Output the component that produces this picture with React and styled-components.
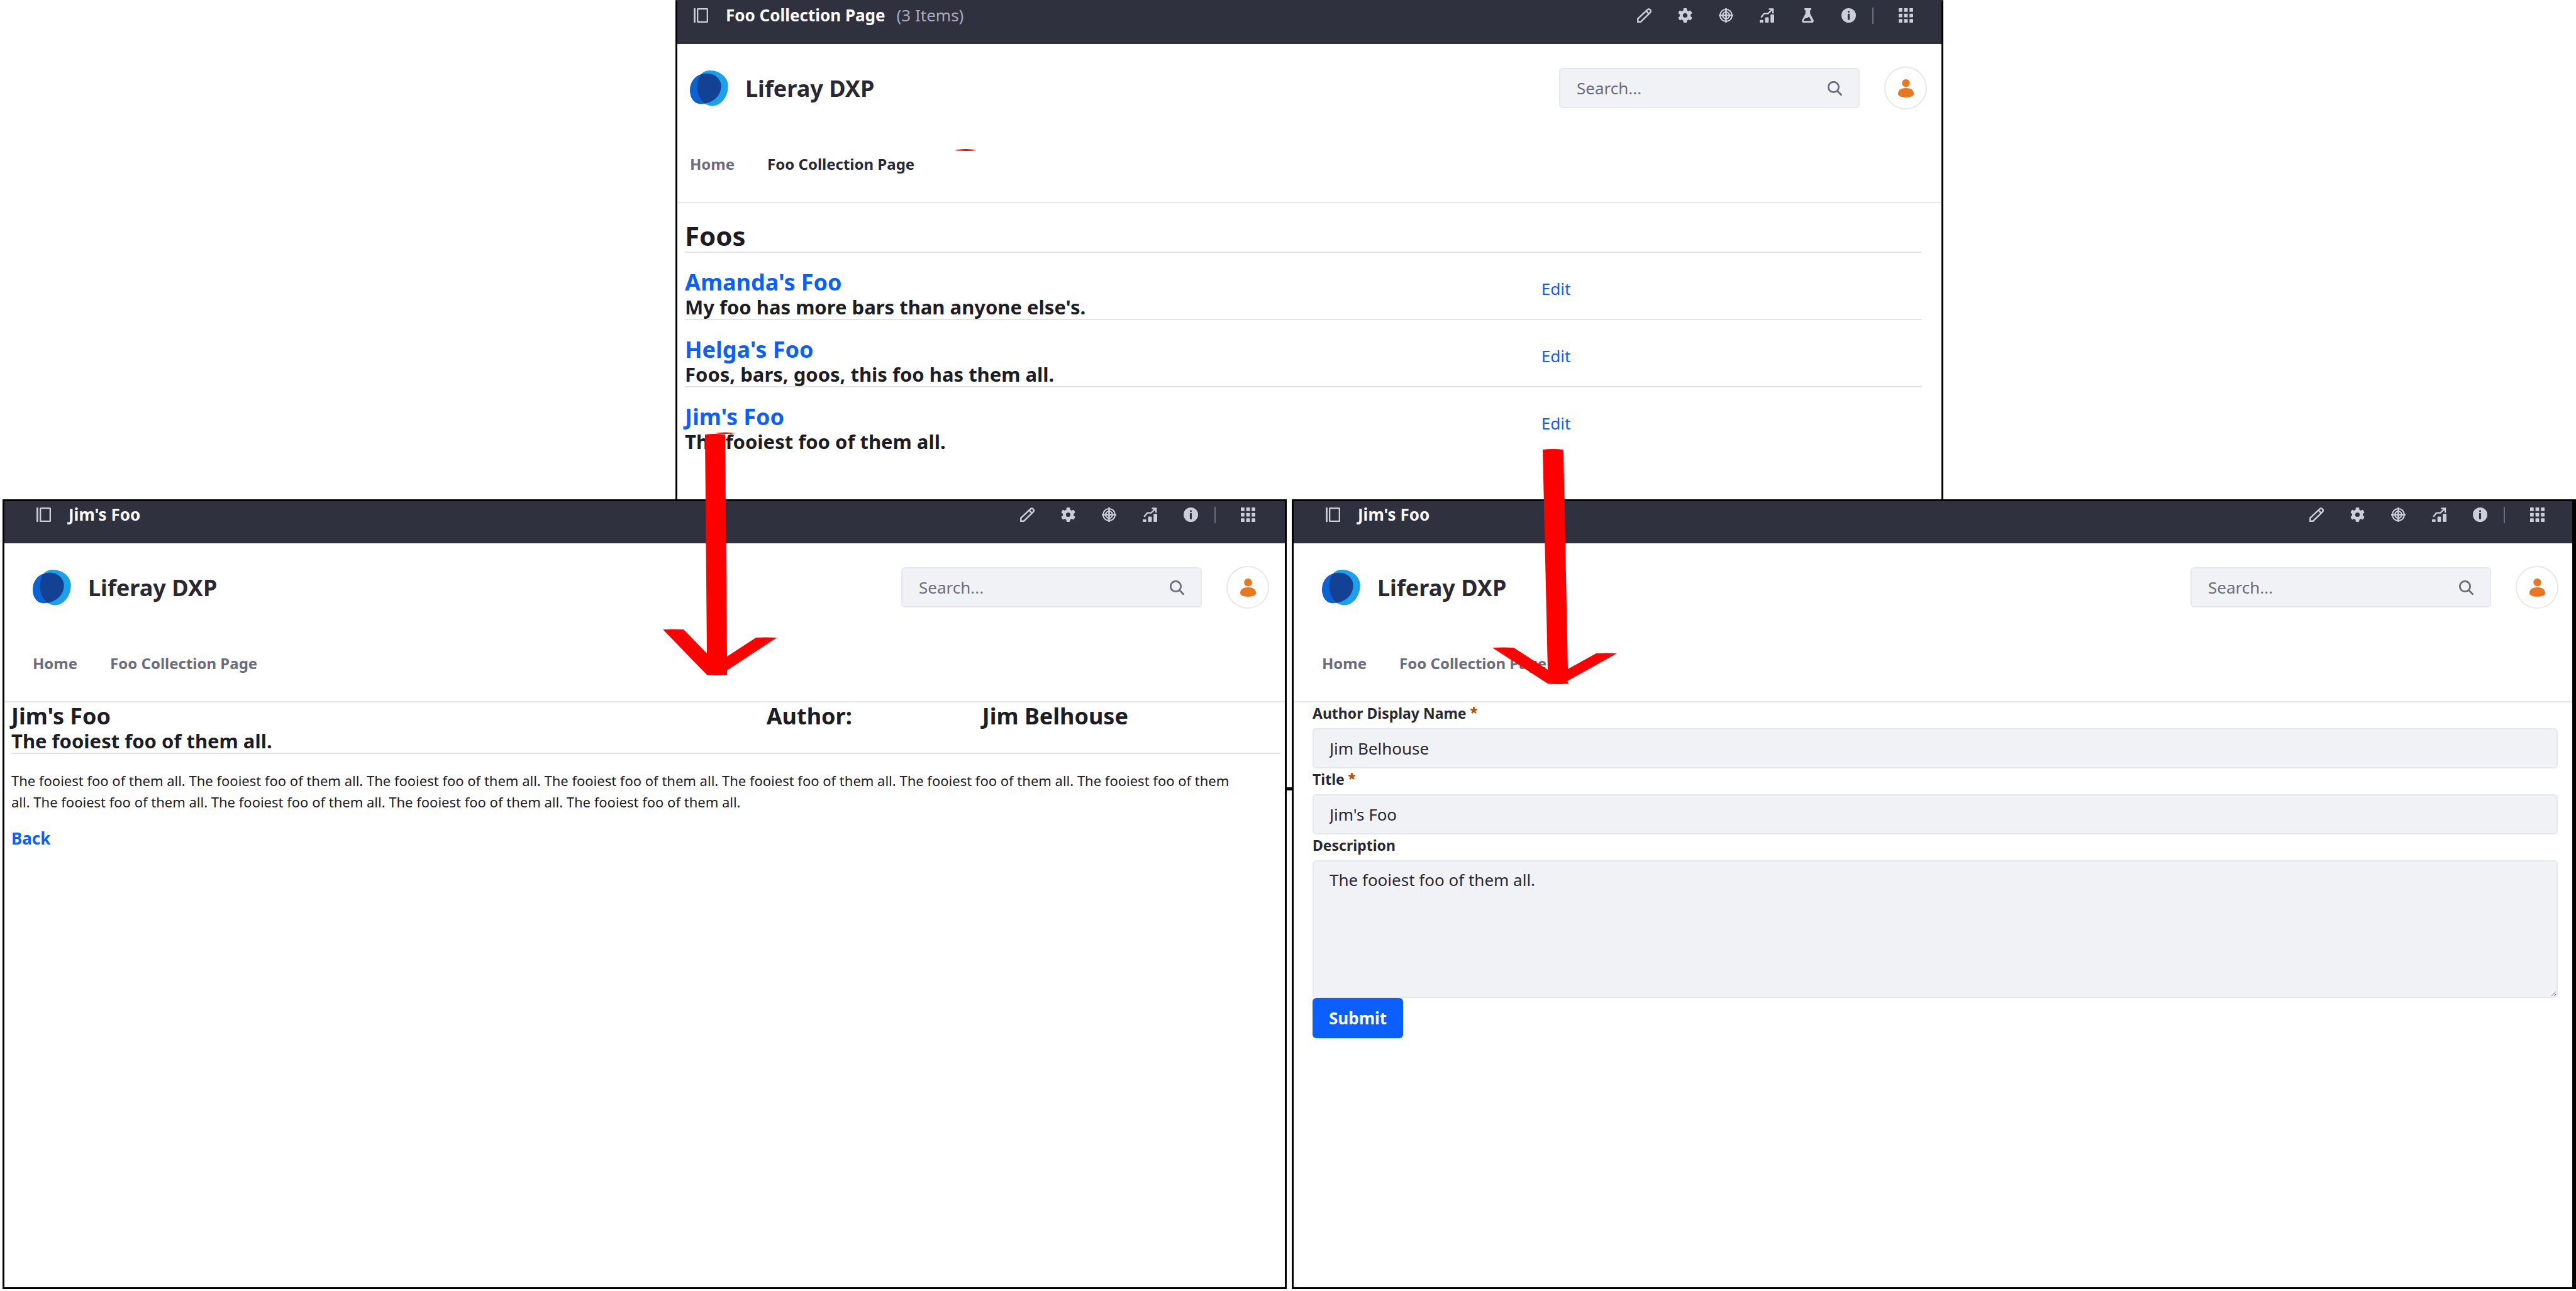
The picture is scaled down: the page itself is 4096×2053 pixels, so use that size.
import React, { useId } from "react";
import styled, { createGlobalStyle } from "styled-components";

const color = {
  ink: "#1c1c24",
  dark: "#272833",
  muted: "#6b6c7e",
  bar: "#30313f",
  barIcon: "#cdced9",
  barMuted: "#a7a9bc",
  line: "#e7e7ed",
  rule: "#e3e3e3",
  field: "#f1f2f5",
  link: "#0b5fff",
  required: "#b95000",
  user: "#e87722",
};

const GlobalStyle = createGlobalStyle`
  *, *::before, *::after { box-sizing: border-box; }
  body {
    margin: 0;
    background: #fff;
    color: ${color.ink};
    font-family: "Noto Sans", sans-serif;
    font-size: 26px;
    line-height: 39px;
  }
  h1, h2, p { margin: 0; }
  a { color: inherit; text-decoration: none; }
  svg { display: block; flex: none; }
  button, input, textarea { font: inherit; color: inherit; margin: 0; }
`;

/* ---------- page ---------- */

const Page = styled.main`
  position: relative;
  min-height: 100vh;
  display: flex;
  flex-direction: column;
`;

const TopRow = styled.div`
  display: grid;
  grid-template-columns: 1074fr 2016fr 1006fr;
`;

const BottomRow = styled.div`
  flex: 1;
  display: grid;
  grid-template-columns: 1fr 8px 1fr;
  padding: 0 0 3px 4px;
`;

const Panel = styled.section`
  min-width: 0;
  background: #fff;
  border: 3px solid #000;
  border-right-width: ${(p) => (p.$thickEnd ? 6 : 3)}px;
`;

const CroppedPanel = styled(Panel)`
  grid-column: 2;
  border-top-color: ${color.bar};
  border-bottom: 0;
`;

const Connector = styled.div`
  height: 5px;
  margin-top: 458px;
  background: #000;
`;

const Annotations = styled.svg`
  position: absolute;
  inset: 0;
  width: 100%;
  pointer-events: none;
`;

/* ---------- control bar ---------- */

const Bar = styled.div`
  height: 67px;
  padding: 0 ${(p) => p.$end}px 24px ${(p) => p.$start}px;
  display: flex;
  align-items: center;
  background: ${color.bar};
  color: ${color.barIcon};
`;

const BarTitle = styled.h1`
  flex: 1;
  margin-left: 28px;
  font-size: 26px;
  font-weight: 700;
  line-height: 39px;
  color: #fff;
`;

const BarCount = styled.span`
  margin-left: 18px;
  font-weight: 400;
  color: ${color.barMuted};
`;

const IconButton = styled.button`
  padding: 0;
  border: 0;
  background: none;
  color: inherit;
  cursor: pointer;
`;

const BarTools = styled.div`
  display: flex;
  align-items: center;
  gap: 42px;
`;

const BarDivider = styled.span`
  width: 2px;
  height: 26px;
  margin: 0 40px 0 26px;
  background: ${color.muted};
`;

/* ---------- site header ---------- */

const SiteHeader = styled.header`
  padding: 36px ${(p) => p.$end - 22}px 42px ${(p) => p.$start - 6}px;
  border-bottom: 2px solid ${color.line};
`;

const BrandRow = styled.div`
  height: 68px;
  display: flex;
  align-items: center;
`;

const Brand = styled.a`
  flex: 1;
  display: flex;
  align-items: center;
  gap: 27px;
  font-size: 36px;
  font-weight: 700;
  line-height: 43px;
  color: ${color.dark};
`;

const SearchForm = styled.form`
  flex: 0 1 478px;
  height: 64px;
  padding: 0 26px;
  display: flex;
  align-items: center;
  background: ${color.field};
  border: 2px solid ${color.line};
  border-radius: 6px;
  color: ${color.muted};
`;

const SearchInput = styled.input`
  flex: 1;
  min-width: 0;
  padding: 0;
  border: 0;
  outline: 0;
  background: none;
  &::placeholder { color: ${color.muted}; opacity: 1; }
`;

const Avatar = styled.button`
  width: 68px;
  height: 68px;
  margin-left: 39px;
  padding: 0;
  display: flex;
  align-items: center;
  justify-content: center;
  background: #fff;
  border: 2px solid ${color.line};
  border-radius: 50%;
`;

const Nav = styled.nav`
  margin-top: 69px;
  display: flex;
  gap: 52px;
`;

const NavLink = styled.a`
  font-size: 24px;
  font-weight: 700;
  line-height: 36px;
  color: ${(p) => (p.$active ? color.dark : color.muted)};
`;

/* ---------- text ---------- */

const Heading = styled.h1`
  font-size: 42px;
  font-weight: 700;
  line-height: 50px;
`;

const ItemTitle = styled.h1`
  font-size: 36px;
  font-weight: 700;
  line-height: 43px;
`;

const ItemSummary = styled.h2`
  font-size: 31px;
  font-weight: 700;
  line-height: 37px;
`;

const Link = styled.a`
  color: ${color.link};
  font-weight: ${(p) => (p.$bold ? 700 : "inherit")};
`;

/* ---------- collection ---------- */

const Collection = styled.div`
  padding: 27px 31px 73px 12px;
`;

const ItemRow = styled.article`
  display: grid;
  grid-template-columns: 9fr 4fr;
  padding-top: 25px;
  border-top: 2px solid ${color.rule};
`;

const ItemAction = styled.div`
  padding-top: 13px;
`;

/* ---------- detail ---------- */

const Detail = styled.div`
  padding: 0 7px 0 11px;
`;

const DetailHead = styled.div`
  display: grid;
  grid-template-columns: 119fr 34fr 47fr;
  border-bottom: 2px solid ${color.rule};
`;

const DetailText = styled.p`
  margin: 25px 0 22px;
  padding-right: 64px;
  font-size: 22px;
  line-height: 34px;
`;

/* ---------- form ---------- */

const EditForm = styled.form`
  padding: 0 23px 0 30px;
`;

const Label = styled.label`
  display: flex;
  gap: 6px;
  padding-bottom: 7px;
  font-size: 23px;
  font-weight: 700;
  line-height: 34px;
  color: ${color.dark};
  svg { margin-top: 7px; color: ${color.required}; }
`;

const Input = styled.input`
  display: block;
  width: 100%;
  height: 64px;
  padding: 0 25px;
  background: ${color.field};
  border: 2px solid ${color.line};
  border-radius: 6px;
  color: ${color.dark};
`;

const TextArea = styled.textarea`
  display: block;
  width: 100%;
  padding: 10px 25px;
  background: ${color.field};
  border: 2px solid ${color.line};
  border-radius: 6px;
  color: ${color.dark};
  resize: vertical;
`;

const Submit = styled.button`
  height: 64px;
  padding: 0 26px;
  background: ${color.link};
  border: 0;
  border-radius: 6px;
  color: #fff;
  font-weight: 700;
`;

/* ---------- icons ---------- */

const Icon = ({ children }) => (
  <svg width="23" height="23" viewBox="0 0 16 16" fill="currentColor" aria-hidden="true">
    {children}
  </svg>
);

const MenuIcon = () => (
  <Icon>
    <rect x="0" y="0" width="2" height="16" rx="0.6" />
    <rect x="4.3" y="0.8" width="10.9" height="14.4" rx="0.3" fill="none" stroke="currentColor" strokeWidth="1.6" />
  </Icon>
);

const PencilIcon = () => (
  <Icon>
    <g fill="none" stroke="currentColor" strokeWidth="1.7">
      <path d="M0.9 15.1V11.7L11.5 1.7a2.2 2.2 0 0 1 3.1 3.1L4.1 15.1z" />
      <path d="M10 3.1l3.2 3.2" />
    </g>
  </Icon>
);

const GearIcon = () => (
  <Icon>
    <circle cx="8" cy="8" r="6" />
    {[0, 60, 120].map((a) => (
      <rect key={a} x="6" y="0" width="4" height="16" rx="1" transform={`rotate(${a} 8 8)`} />
    ))}
    <circle cx="8" cy="8" r="2.5" fill={color.bar} />
  </Icon>
);

const TargetIcon = () => (
  <Icon>
    <g fill="none" stroke="currentColor" strokeWidth="1.5">
      <circle cx="8" cy="8" r="6.6" />
      <circle cx="8" cy="8" r="3.8" />
      <path d="M0 8h16M8 0v16" strokeWidth="1.8" />
    </g>
  </Icon>
);

const ChartIcon = () => (
  <Icon>
    <rect x="0" y="13" width="4" height="3" rx="0.9" />
    <rect x="6" y="10" width="4" height="6" rx="0.9" />
    <rect x="12" y="7" width="4" height="9" rx="0.9" />
    <path
      d="M2 9.8L4.9 6h4.3L14 1.5M10.8 1h3.9v4"
      fill="none"
      stroke="currentColor"
      strokeWidth="1.7"
      strokeLinecap="round"
      strokeLinejoin="round"
    />
  </Icon>
);

const FlaskIcon = () => (
  <Icon>
    <path d="M5 0h6a1 1 0 0 1 1 1 1 1 0 0 1-1 1h-.4v4l3.6 6.8c.8 1.7 0 3.2-1.7 3.2h-9c-1.7 0-2.5-1.5-1.7-3.2L5.4 6V2H5a1 1 0 0 1-1-1 1 1 0 0 1 1-1z" />
    <path d="M4 12l1.6-.9 1.3.1 2.5-1.8 2.7 4.6H3.9c-.7 0-.6-1 .1-2z" fill={color.bar} />
  </Icon>
);

const InfoIcon = () => (
  <Icon>
    <circle cx="8" cy="8" r="8" />
    <circle cx="8" cy="4" r="1.1" fill={color.bar} />
    <rect x="6.9" y="6" width="2.2" height="7" rx="0.9" fill={color.bar} />
  </Icon>
);

const AppsIcon = () => (
  <Icon>
    {[0, 6, 12].map((y) =>
      [0, 6, 12].map((x) => <rect key={`${x}-${y}`} x={x} y={y} width="4" height="4" rx="0.4" />)
    )}
  </Icon>
);

const SearchIcon = () => (
  <Icon>
    <g fill="none" stroke="currentColor" strokeLinecap="round">
      <circle cx="6.6" cy="6.6" r="5.7" strokeWidth="1.9" />
      <path d="M10.9 10.9L15 15.1" strokeWidth="2" />
    </g>
  </Icon>
);

const RequiredIcon = () => (
  <svg width="11" height="11" viewBox="0 0 10 10" role="img" aria-label="Required">
    <path
      d="M5 5V0M5 5L0.3 3.6M5 5L9.7 3.6M5 5L2.1 9.2M5 5L7.9 9.2"
      stroke="currentColor"
      strokeWidth="2.4"
    />
  </svg>
);

const UserIcon = () => (
  <svg width="25" height="29" viewBox="0 0 25 29" fill={color.user} aria-hidden="true">
    <circle cx="12.5" cy="6.2" r="6.2" />
    <path d="M0 23C0 17 5 13.9 12.5 13.9S25 17 25 23C25 27.2 19 28.8 12.5 28.8S0 27.2 0 23z" />
  </svg>
);

const blueShape =
  "M26.8 4.8C40 4.8 49.5 14 49.5 25C49.5 42 34 53.2 17 53.2C6 53.2 0 43 0 31.5C0 16 11 4.8 26.8 4.8z";
const lightShape =
  "M31.4 0C48 0 60.7 11 60.7 25C60.7 42 49 56.5 35.5 56.5C22 56.5 11.6 42 11.6 27C11.6 12 18 0 31.4 0z";

const Logo = () => {
  const id = useId();
  return (
    <svg width="61" height="57" viewBox="0 0 61 57" aria-hidden="true">
      <clipPath id={id}>
        <path d={blueShape} />
      </clipPath>
      <path d={lightShape} fill="#1ba0ea" />
      <path d={blueShape} fill="#0b63d2" />
      <path d={lightShape} fill="#134194" clipPath={`url(#${id})`} />
    </svg>
  );
};

/* ---------- shared chrome ---------- */

const tools = [
  { name: "Edit", Glyph: PencilIcon },
  { name: "Configure Page", Glyph: GearIcon },
  { name: "Simulation", Glyph: TargetIcon },
  { name: "Content Performance", Glyph: ChartIcon },
  { name: "A/B Test", Glyph: FlaskIcon, collectionOnly: true },
  { name: "Information", Glyph: InfoIcon },
];

function SiteChrome({ title, count, start, end, active }) {
  const shown = tools.filter((t) => count || !t.collectionOnly);
  return (
    <>
      <Bar $start={start} $end={end}>
        <IconButton type="button" aria-label="Product Menu">
          <MenuIcon />
        </IconButton>
        <BarTitle>
          {title}
          {count && <BarCount>{count}</BarCount>}
        </BarTitle>
        <BarTools>
          {shown.map(({ name, Glyph }) => (
            <IconButton key={name} type="button" aria-label={name}>
              <Glyph />
            </IconButton>
          ))}
        </BarTools>
        <BarDivider />
        <IconButton type="button" aria-label="Applications Menu">
          <AppsIcon />
        </IconButton>
      </Bar>
      <SiteHeader $start={start} $end={end}>
        <BrandRow>
          <Brand href="#home">
            <Logo />
            Liferay DXP
          </Brand>
          <SearchForm role="search">
            <SearchInput type="text" placeholder="Search..." aria-label="Search" />
            <IconButton type="submit" aria-label="Submit search">
              <SearchIcon />
            </IconButton>
          </SearchForm>
          <Avatar type="button" aria-label="User">
            <UserIcon />
          </Avatar>
        </BrandRow>
        <Nav>
          <NavLink href="#home">Home</NavLink>
          <NavLink href="#foos" $active={active}>
            Foo Collection Page
          </NavLink>
        </Nav>
      </SiteHeader>
    </>
  );
}

/* ---------- content ---------- */

const foos = [
  { title: "Amanda's Foo", summary: "My foo has more bars than anyone else's." },
  { title: "Helga's Foo", summary: "Foos, bars, goos, this foo has them all." },
  { title: "Jim's Foo", summary: "The fooiest foo of them all." },
];

const body = Array(11).fill("The fooiest foo of them all.").join(" ");

export default function App() {
  return (
    <>
      <GlobalStyle />
      <Page>
        <TopRow>
          <CroppedPanel>
            <SiteChrome title="Foo Collection Page" count="(3 Items)" start={26} end={45} active />
            <Collection>
              <Heading>Foos</Heading>
              {foos.map((foo) => (
                <ItemRow key={foo.title}>
                  <div>
                    <ItemTitle>
                      <Link href="#foo">{foo.title}</Link>
                    </ItemTitle>
                    <ItemSummary>{foo.summary}</ItemSummary>
                  </div>
                  <ItemAction>
                    <Link href="#edit">Edit</Link>
                  </ItemAction>
                </ItemRow>
              ))}
            </Collection>
          </CroppedPanel>
        </TopRow>

        <BottomRow>
          <Panel>
            <SiteChrome title="Jim's Foo" start={51} end={47} />
            <Detail>
              <DetailHead>
                <div>
                  <ItemTitle>Jim's Foo</ItemTitle>
                  <ItemSummary>The fooiest foo of them all.</ItemSummary>
                </div>
                <ItemTitle as="p">Author:</ItemTitle>
                <ItemTitle as="p">Jim Belhouse</ItemTitle>
              </DetailHead>
              <DetailText>{body}</DetailText>
              <Link href="#foos" $bold>
                Back
              </Link>
            </Detail>
          </Panel>
          <Connector />
          <Panel $thickEnd>
            <SiteChrome title="Jim's Foo" start={51} end={44} />
            <EditForm>
              <Label htmlFor="author">
                Author Display Name
                <RequiredIcon />
              </Label>
              <Input id="author" type="text" defaultValue="Jim Belhouse" required />
              <Label htmlFor="title">
                Title
                <RequiredIcon />
              </Label>
              <Input id="title" type="text" defaultValue="Jim's Foo" required />
              <Label htmlFor="description">Description</Label>
              <TextArea id="description" rows={5} defaultValue="The fooiest foo of them all." />
              <Submit type="submit">Submit</Submit>
            </EditForm>
          </Panel>
        </BottomRow>

        <Annotations viewBox="0 0 4096 2053" fill="#f00" aria-hidden="true">
          <path d="M1518 239Q1536 235 1553 239Q1536 241 1518 239z" />
          <path d="M1136 689Q1153 686 1170 689Q1153 691 1136 689z" />
          <path d="M1121 691Q1137 689 1153 691L1156 1044L1202 1014Q1218 1013 1235 1014L1156 1066V1073Q1140 1075 1124 1073L1054 1001Q1070 1000 1087 1001L1124 1039z" />
          <path d="M2453 715Q2469 713 2486 715L2493 1064L2538 1039Q2554 1038 2571 1039L2492 1083L2494 1087Q2477 1089 2461 1087L2373 1030Q2390 1029 2407 1030L2461 1065z" />
        </Annotations>
      </Page>
    </>
  );
}
